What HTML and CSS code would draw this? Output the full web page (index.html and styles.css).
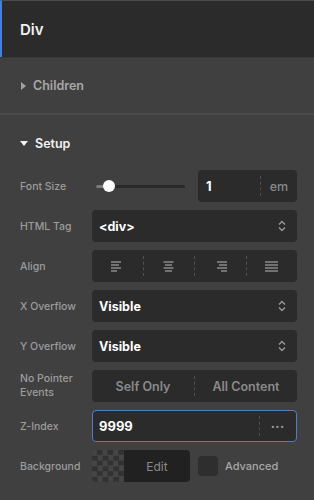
FILE: index.html
```html
<!DOCTYPE html>
<html lang="en">
<head>
    <meta charset="UTF-8">
    <meta name="viewport" content="width=device-width, initial-scale=1.0">
    <title>Div Settings</title>
    <link rel="stylesheet" href="styles.css">
</head>
<body>
    <div class="header">Div</div>
    <div class="section children">
        <span class="caret-right"></span>Children
    </div>
    <div class="section setup">
        <div class="setup-title"><span class="caret-down"></span>Setup</div>
        <div class="rows">
            <div class="label">Font Size</div>
            <div class="control font-size">
                <div class="slider">
                    <div class="track"><div class="fill"></div></div>
                    <div class="thumb"></div>
                </div>
                <div class="box unit-input">
                    <span class="value">1</span>
                    <span class="unit">em</span>
                </div>
            </div>

            <div class="label">HTML Tag</div>
            <div class="box select">
                <span class="value">&lt;div&gt;</span>
                <svg class="chevrons" width="8" height="12" viewBox="0 0 8 12"><path d="M1 4.5 L4 1.5 L7 4.5 M1 7.5 L4 10.5 L7 7.5" fill="none" stroke="#9a9a9a" stroke-width="1.3"/></svg>
            </div>

            <div class="label">Align</div>
            <div class="box segments">
                <div class="seg">
                    <svg width="13" height="11" viewBox="0 0 13 11"><path d="M0 1h10M0 4h8M0 7h10M0 10h6" stroke="#8a8a8a" stroke-width="1.3"/></svg>
                </div>
                <div class="seg">
                    <svg width="13" height="11" viewBox="0 0 13 11"><path d="M1.5 1h10M3 4h7M1.5 7h10M3 10h7" stroke="#8a8a8a" stroke-width="1.3"/></svg>
                </div>
                <div class="seg">
                    <svg width="13" height="11" viewBox="0 0 13 11"><path d="M3 1h10M5 4h8M3 7h10M7 10h6" stroke="#8a8a8a" stroke-width="1.3"/></svg>
                </div>
                <div class="seg">
                    <svg width="13" height="11" viewBox="0 0 13 11"><path d="M0 1h13M0 4h13M0 7h13M0 10h13" stroke="#8a8a8a" stroke-width="1.3"/></svg>
                </div>
            </div>

            <div class="label">X Overflow</div>
            <div class="box select">
                <span class="value">Visible</span>
                <svg class="chevrons" width="8" height="12" viewBox="0 0 8 12"><path d="M1 4.5 L4 1.5 L7 4.5 M1 7.5 L4 10.5 L7 7.5" fill="none" stroke="#9a9a9a" stroke-width="1.3"/></svg>
            </div>

            <div class="label">Y Overflow</div>
            <div class="box select">
                <span class="value">Visible</span>
                <svg class="chevrons" width="8" height="12" viewBox="0 0 8 12"><path d="M1 4.5 L4 1.5 L7 4.5 M1 7.5 L4 10.5 L7 7.5" fill="none" stroke="#9a9a9a" stroke-width="1.3"/></svg>
            </div>

            <div class="label two-line">No Pointer Events</div>
            <div class="box segments text-segs">
                <div class="seg">Self Only</div>
                <div class="seg">All Content</div>
            </div>

            <div class="label">Z-Index</div>
            <div class="box unit-input focused">
                <span class="value">9999</span>
                <span class="unit dots">&bull;&bull;&bull;</span>
            </div>

            <div class="label">Background</div>
            <div class="control bg-row">
                <div class="swatch-group">
                    <div class="checker"></div>
                    <div class="edit">Edit</div>
                </div>
                <div class="checkbox"></div>
                <span class="adv">Advanced</span>
            </div>
        </div>
    </div>
</body>
</html>
```

FILE: styles.css
```css
body {
    margin: 0;
    padding: 0;
    background: #404040;
    font-family: Inter, "Open Sans", sans-serif;
    width: 314px;
    height: 500px;
    overflow: hidden;
}
.header {
    height: 56px;
    background: #2b2b2b;
    border-top: 1px solid #4d4d4d;
    border-left: 2px solid #3d82e8;
    padding-left: 18px;
    display: flex;
    align-items: center;
    color: #f2f2f2;
    font-size: 15px;
    font-weight: 600;
}
.section {
    background: #404040;
}
.children {
    height: 58px;
    border-top: 1px solid #373737;
    border-bottom: 2px solid #4b4b4b;
    display: flex;
    align-items: center;
    padding-left: 21px;
    color: #a8a8a8;
    font-size: 12.5px;
    font-weight: 600;
    box-sizing: border-box;
}
.caret-right {
    width: 0;
    height: 0;
    border-top: 4px solid transparent;
    border-bottom: 4px solid transparent;
    border-left: 5px solid #a0a0a0;
    margin-right: 7px;
}
.setup {
    padding-top: 20px;
}
.setup-title {
    height: 16px;
    display: flex;
    align-items: center;
    padding-left: 20px;
    color: #f2f2f2;
    font-size: 12.5px;
    font-weight: 600;
    margin-bottom: 19px;
}
.caret-down {
    width: 0;
    height: 0;
    border-left: 4px solid transparent;
    border-right: 4px solid transparent;
    border-top: 5px solid #f2f2f2;
    margin-right: 7px;
}
.rows {
    display: grid;
    grid-template-columns: 72px 205px;
    grid-auto-rows: 32px;
    row-gap: 8px;
    padding-left: 20px;
}
.label {
    display: flex;
    align-items: center;
    color: #9c9c9c;
    font-size: 10.5px;
    font-weight: 500;
}
.two-line {
    line-height: 14px;
    padding-right: 14px;
}
.box {
    background: #2b2b2b;
    border-radius: 4px;
    display: flex;
    align-items: center;
    box-sizing: border-box;
}
.control {
    display: flex;
    align-items: center;
}
.font-size .slider {
    position: relative;
    width: 89px;
    margin-left: 4px;
    margin-right: 13px;
    height: 14px;
    display: flex;
    align-items: center;
}
.track {
    width: 100%;
    height: 3px;
    background: #2a2a2a;
    border-radius: 2px;
}
.fill {
    width: 13px;
    height: 3px;
    background: #7a7a7a;
    border-radius: 2px;
}
.thumb {
    position: absolute;
    left: 7px;
    top: 1px;
    width: 12px;
    height: 12px;
    border-radius: 50%;
    background: #ffffff;
}
.unit-input {
    height: 32px;
    flex: 1;
    padding-left: 8px;
}
.unit-input .value {
    flex: 1;
    color: #ffffff;
    font-size: 13px;
    font-weight: 700;
}
.unit-input .unit {
    width: 36px;
    height: 20px;
    border-left: 1px dashed #4f4f4f;
    display: flex;
    align-items: center;
    justify-content: center;
    color: #888;
    font-size: 12.5px;
    font-weight: 500;
}
.unit-input .dots {
    font-size: 7px;
    letter-spacing: 1px;
    color: #9a9a9a;
}
.focused {
    border: 1px solid #4f7fc0;
    padding-left: 6px;
}
.select {
    padding: 0 11px 0 7px;
    justify-content: space-between;
}
.select .value {
    color: #ffffff;
    font-size: 12.5px;
    font-weight: 700;
}
.segments .seg {
    flex: 1;
    height: 20px;
    display: flex;
    align-items: center;
    justify-content: center;
}
.segments .seg + .seg {
    border-left: 1px dashed #525252;
}
.text-segs .seg {
    color: #8a8a8a;
    font-size: 12.5px;
    font-weight: 600;
}
.swatch-group {
    display: flex;
    height: 32px;
    width: 98px;
    border-radius: 4px;
    overflow: hidden;
    margin-right: 8px;
}
.checker {
    width: 32px;
    height: 32px;
    background-color: #454545;
    background-image: conic-gradient(#323232 25%, transparent 0 50%, #323232 0 75%, transparent 0);
    background-size: 10.6px 10.6px;
}
.edit {
    flex: 1;
    background: #212121;
    display: flex;
    align-items: center;
    justify-content: center;
    color: #8a8a8a;
    font-size: 12px;
}
.checkbox {
    width: 20px;
    height: 20px;
    background: #2e2e2e;
    border-radius: 4px;
    margin-right: 7px;
}
.adv {
    color: #a8a8a8;
    font-size: 11px;
    font-weight: 500;
}
```
